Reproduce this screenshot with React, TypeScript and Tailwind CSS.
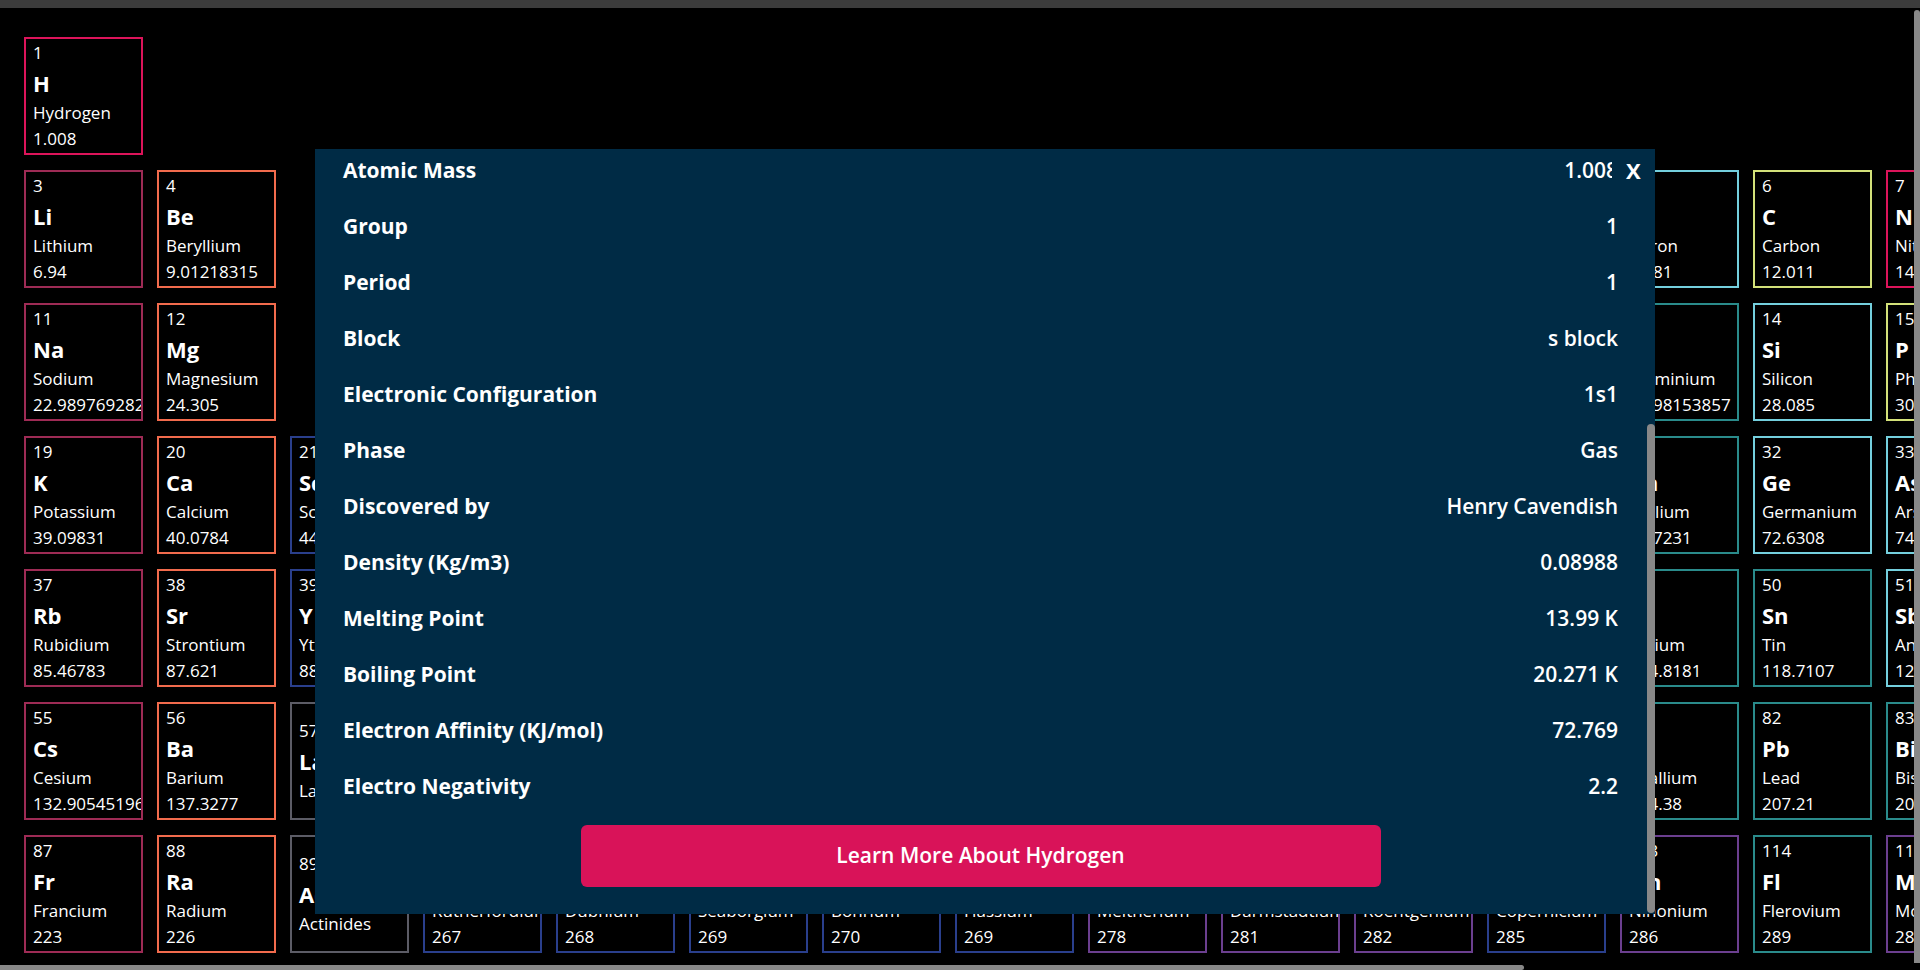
import { useLayoutEffect, useRef } from "react";

type Cat = "dn" | "ng" | "am" | "ae" | "md" | "pn" | "pt" | "tm" | "lg" | "uk";

const borderFor: Record<Cat, string> = {
  dn: "border-[#dc145a]",
  ng: "border-[#b05fd0]",
  am: "border-[#9e2b55]",
  ae: "border-[#f26b4d]",
  md: "border-[#74cfdd]",
  pn: "border-[#d3e179]",
  pt: "border-[#2a8b8b]",
  tm: "border-[#2a3f8c]",
  lg: "border-[#5c5c66]",
  uk: "border-[#6b3f8f]",
};

const colStart = [
  "",
  "col-start-1",
  "col-start-2",
  "col-start-3",
  "col-start-4",
  "col-start-5",
  "col-start-6",
  "col-start-7",
  "col-start-8",
  "col-start-9",
  "col-start-10",
  "col-start-11",
  "col-start-12",
  "col-start-13",
  "col-start-14",
  "col-start-15",
  "col-start-16",
  "col-start-17",
  "col-start-18",
];

const rowStart = [
  "",
  "row-start-1",
  "row-start-2",
  "row-start-3",
  "row-start-4",
  "row-start-5",
  "row-start-6",
  "row-start-7",
];

// number, symbol, name, mass, category, column, row
const elements: [number, string, string, string, Cat, number, number][] = [
  [1, "H", "Hydrogen", "1.008", "dn", 1, 1],
  [2, "He", "Helium", "4.0026022", "ng", 18, 1],
  [3, "Li", "Lithium", "6.94", "am", 1, 2],
  [4, "Be", "Beryllium", "9.01218315", "ae", 2, 2],
  [5, "B", "Boron", "10.81", "md", 13, 2],
  [6, "C", "Carbon", "12.011", "pn", 14, 2],
  [7, "N", "Nitrogen", "14.007", "dn", 15, 2],
  [8, "O", "Oxygen", "15.999", "dn", 16, 2],
  [9, "F", "Fluorine", "18.998403163", "dn", 17, 2],
  [10, "Ne", "Neon", "20.17976", "ng", 18, 2],
  [11, "Na", "Sodium", "22.989769282", "am", 1, 3],
  [12, "Mg", "Magnesium", "24.305", "ae", 2, 3],
  [13, "Al", "Aluminium", "26.98153857", "pt", 13, 3],
  [14, "Si", "Silicon", "28.085", "md", 14, 3],
  [15, "P", "Phosphorus", "30.973761998", "pn", 15, 3],
  [16, "S", "Sulfur", "32.06", "pn", 16, 3],
  [17, "Cl", "Chlorine", "35.45", "dn", 17, 3],
  [18, "Ar", "Argon", "39.9481", "ng", 18, 3],
  [19, "K", "Potassium", "39.09831", "am", 1, 4],
  [20, "Ca", "Calcium", "40.0784", "ae", 2, 4],
  [21, "Sc", "Scandium", "44.9559085", "tm", 3, 4],
  [22, "Ti", "Titanium", "47.8671", "tm", 4, 4],
  [23, "V", "Vanadium", "50.94151", "tm", 5, 4],
  [24, "Cr", "Chromium", "51.99616", "tm", 6, 4],
  [25, "Mn", "Manganese", "54.9380443", "tm", 7, 4],
  [26, "Fe", "Iron", "55.8452", "tm", 8, 4],
  [27, "Co", "Cobalt", "58.9331944", "tm", 9, 4],
  [28, "Ni", "Nickel", "58.69344", "tm", 10, 4],
  [29, "Cu", "Copper", "63.5463", "tm", 11, 4],
  [30, "Zn", "Zinc", "65.382", "tm", 12, 4],
  [31, "Ga", "Gallium", "69.7231", "pt", 13, 4],
  [32, "Ge", "Germanium", "72.6308", "md", 14, 4],
  [33, "As", "Arsenic", "74.9215956", "md", 15, 4],
  [34, "Se", "Selenium", "78.9718", "pn", 16, 4],
  [35, "Br", "Bromine", "79.904", "dn", 17, 4],
  [36, "Kr", "Krypton", "83.7982", "ng", 18, 4],
  [37, "Rb", "Rubidium", "85.46783", "am", 1, 5],
  [38, "Sr", "Strontium", "87.621", "ae", 2, 5],
  [39, "Y", "Yttrium", "88.905842", "tm", 3, 5],
  [40, "Zr", "Zirconium", "91.2242", "tm", 4, 5],
  [41, "Nb", "Niobium", "92.906372", "tm", 5, 5],
  [42, "Mo", "Molybdenum", "95.951", "tm", 6, 5],
  [43, "Tc", "Technetium", "98", "tm", 7, 5],
  [44, "Ru", "Ruthenium", "101.072", "tm", 8, 5],
  [45, "Rh", "Rhodium", "102.905502", "tm", 9, 5],
  [46, "Pd", "Palladium", "106.421", "tm", 10, 5],
  [47, "Ag", "Silver", "107.86822", "tm", 11, 5],
  [48, "Cd", "Cadmium", "112.4144", "tm", 12, 5],
  [49, "In", "Indium", "114.8181", "pt", 13, 5],
  [50, "Sn", "Tin", "118.7107", "pt", 14, 5],
  [51, "Sb", "Antimony", "121.7601", "md", 15, 5],
  [52, "Te", "Tellurium", "127.603", "md", 16, 5],
  [53, "I", "Iodine", "126.904473", "dn", 17, 5],
  [54, "Xe", "Xenon", "131.2936", "ng", 18, 5],
  [55, "Cs", "Cesium", "132.905451966", "am", 1, 6],
  [56, "Ba", "Barium", "137.3277", "ae", 2, 6],
  [57, "La", "Lanthanides", "", "lg", 3, 6],
  [72, "Hf", "Hafnium", "178.492", "tm", 4, 6],
  [73, "Ta", "Tantalum", "180.947882", "tm", 5, 6],
  [74, "W", "Tungsten", "183.841", "tm", 6, 6],
  [75, "Re", "Rhenium", "186.2071", "tm", 7, 6],
  [76, "Os", "Osmium", "190.233", "tm", 8, 6],
  [77, "Ir", "Iridium", "192.2173", "tm", 9, 6],
  [78, "Pt", "Platinum", "195.0849", "tm", 10, 6],
  [79, "Au", "Gold", "196.9665695", "tm", 11, 6],
  [80, "Hg", "Mercury", "200.5923", "tm", 12, 6],
  [81, "Tl", "Thallium", "204.38", "pt", 13, 6],
  [82, "Pb", "Lead", "207.21", "pt", 14, 6],
  [83, "Bi", "Bismuth", "208.980401", "pt", 15, 6],
  [84, "Po", "Polonium", "209", "pt", 16, 6],
  [85, "At", "Astatine", "210", "md", 17, 6],
  [86, "Rn", "Radon", "222", "ng", 18, 6],
  [87, "Fr", "Francium", "223", "am", 1, 7],
  [88, "Ra", "Radium", "226", "ae", 2, 7],
  [89, "Ac", "Actinides", "", "lg", 3, 7],
  [104, "Rf", "Rutherfordium", "267", "tm", 4, 7],
  [105, "Db", "Dubnium", "268", "tm", 5, 7],
  [106, "Sg", "Seaborgium", "269", "tm", 6, 7],
  [107, "Bh", "Bohrium", "270", "tm", 7, 7],
  [108, "Hs", "Hassium", "269", "tm", 8, 7],
  [109, "Mt", "Meitnerium", "278", "uk", 9, 7],
  [110, "Ds", "Darmstadtium", "281", "uk", 10, 7],
  [111, "Rg", "Roentgenium", "282", "uk", 11, 7],
  [112, "Cn", "Copernicium", "285", "tm", 12, 7],
  [113, "Nh", "Nihonium", "286", "uk", 13, 7],
  [114, "Fl", "Flerovium", "289", "pt", 14, 7],
  [115, "Mc", "Moscovium", "289", "uk", 15, 7],
  [116, "Lv", "Livermorium", "293", "uk", 16, 7],
  [117, "Ts", "Tennessine", "294", "uk", 17, 7],
  [118, "Og", "Oganesson", "294", "uk", 18, 7],
];

const hiddenRows = [
  ["Name", "Hydrogen"],
  ["Symbol", "H"],
  ["Atomic Number", "1"],
  ["Category", "diatomic nonmetal"],
];

const detailRows = [
  ["Atomic Mass", "1.008"],
  ["Group", "1"],
  ["Period", "1"],
  ["Block", "s block"],
  ["Electronic Configuration", "1s1"],
  ["Phase", "Gas"],
  ["Discovered by", "Henry Cavendish"],
  ["Density (Kg/m3)", "0.08988"],
  ["Melting Point", "13.99 K"],
  ["Boiling Point", "20.271 K"],
  ["Electron Affinity (KJ/mol)", "72.769"],
  ["Electro Negativity", "2.2"],
];

const Cell = ({ el }: { el: (typeof elements)[number] }) => {
  const [num, sym, name, mass, cat, col, row] = el;
  return (
    <div
      className={`${colStart[col]} ${rowStart[row]} flex h-[118px] w-[119px] flex-col justify-center overflow-hidden border-2 ${borderFor[cat]} bg-black px-[7px] text-white`}
    >
      <span className="whitespace-nowrap text-[17px] leading-[26px]">{num}</span>
      <span className="whitespace-nowrap text-[22px] font-bold leading-[34px]">{sym}</span>
      <span className="whitespace-nowrap text-[17px] leading-[26px]">{name}</span>
      {mass && (
        <span className="whitespace-nowrap text-[17px] leading-[26px]">{mass}</span>
      )}
    </div>
  );
};

const Row = ({ label, value }: { label: string; value: string }) => (
  <div className="flex items-center justify-between py-3 leading-[32px]">
    <span className="text-[21px] font-bold">{label}</span>
    <span className="text-[21px] font-semibold">{value}</span>
  </div>
);

export default function App() {
  const listRef = useRef<HTMLDivElement>(null);

  useLayoutEffect(() => {
    if (listRef.current) listRef.current.scrollTop = listRef.current.scrollHeight;
  }, []);

  return (
    <div className="relative flex h-screen w-screen flex-col overflow-hidden bg-black font-['Open_Sans',sans-serif] text-white">
      <div className="h-[8px] shrink-0 bg-[#3c3c3c]"></div>

      <div className="flex min-h-0 flex-1">
        <div className="min-w-0 flex-1 overflow-hidden">
          <div className="grid w-max grid-cols-[repeat(18,119px)] grid-rows-[repeat(7,118px)] gap-x-[14px] gap-y-[15px] pb-[20px] pl-[24px] pt-[29px]">
            {elements.map((el) => (
              <Cell key={el[0]} el={el} />
            ))}
          </div>
        </div>
        {/* page scrollbar, vertical */}
        <div className="w-[6px] shrink-0 pb-[2px] pt-[2px]">
          <div className="h-full rounded-t-[4px] bg-[#888]"></div>
        </div>
      </div>
      {/* page scrollbar, horizontal */}
      <div className="h-[5px] shrink-0">
        <div className="h-full w-[1524px] rounded-r-[4px] bg-[#888]"></div>
      </div>

      <div className="absolute left-[315px] top-[149px] flex h-[765px] w-[1340px] bg-[#002b45]">
        <div ref={listRef} className="min-w-0 flex-1 overflow-hidden">
          <div className="pb-[27px] pl-[28px] pr-[29px]">
            <div className="flex h-[203px] flex-col items-center justify-center">
              <span className="text-[64px] font-bold leading-[80px]">H</span>
              <span className="text-[28px] font-semibold">Hydrogen</span>
            </div>
            {hiddenRows.map(([l, v]) => (
              <Row key={l} label={l} value={v} />
            ))}
            {detailRows.map(([l, v]) => (
              <Row key={l} label={l} value={v} />
            ))}
            <div className="mt-[11px] flex justify-center">
              <button className="h-[62px] w-[800px] rounded-md bg-[#d91359] text-[21px] font-semibold text-white">
                Learn More About Hydrogen
              </button>
            </div>
          </div>
        </div>
        {/* modal scrollbar */}
        <div className="w-[8px] shrink-0 pt-[275px] pb-[1px]">
          <div className="h-full rounded-full bg-[#888]"></div>
        </div>
        <button className="absolute right-[8px] top-0 flex h-[42px] w-[35px] items-center bg-[#002b45] pl-[14px] text-[22px] font-bold leading-none text-white">
          X
        </button>
      </div>
    </div>
  );
}
